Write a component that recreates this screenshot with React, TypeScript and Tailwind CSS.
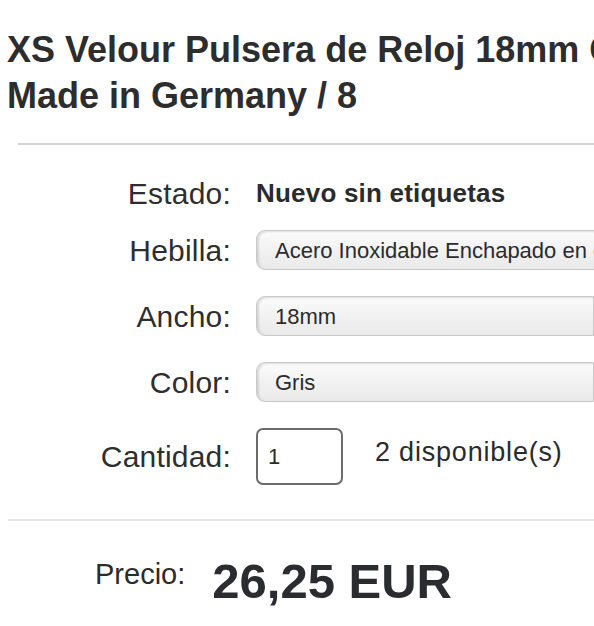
const Select = ({ value }: { value: string }) => (
  <div className="flex h-[40px] flex-1 items-center overflow-hidden whitespace-nowrap rounded-l-[9px] border border-[#c9c9c9] bg-gradient-to-b from-[#fbfbfb] to-[#e9e9e9] pl-[18px] text-[22px] text-[#2b2b2b] shadow-[inset_2px_1px_2px_rgba(0,0,0,0.12)]">
    {value}
  </div>
);

const Row = ({ label, children, h }: { label: string; children: React.ReactNode; h: string }) => (
  <div className={`flex items-center ${h}`}>
    <div className="w-[231px] shrink-0 text-right text-[30px] tracking-[0.2px] text-[#2e2e2e]">{label}</div>
    <div className="ml-[25px] flex flex-1 items-center">{children}</div>
  </div>
);

export default function App() {
  return (
    <div
      className="h-[626px] w-[594px] overflow-hidden bg-white text-[#2b2b2b]"
      style={{ fontFamily: '"Liberation Sans", Arial, sans-serif' }}
    >
      <h1 className="whitespace-nowrap pl-[7px] pt-[27px] text-[36px] font-bold leading-[46px] text-[#2d2d2d]">
        XS Velour Pulsera de Reloj 18mm Gris
        <br />
        Made in Germany / 8
      </h1>
      <div className="ml-[18px] mt-[24px] h-[2px] bg-[#d2d2d2]" />

      <div className="mt-[24px] flex flex-col">
        <Row label="Estado:" h="h-[48px]">
          <span className="whitespace-nowrap text-[26px] font-bold tracking-[0.2px] text-[#2b2b2b]">Nuevo sin etiquetas</span>
        </Row>
        <Row label="Hebilla:" h="h-[66px]">
          <Select value="Acero Inoxidable Enchapado en oro" />
        </Row>
        <Row label="Ancho:" h="h-[66px]">
          <Select value="18mm" />
        </Row>
        <Row label="Color:" h="h-[66px]">
          <Select value="Gris" />
        </Row>
        <Row label="Cantidad:" h="h-[82px]">
          <div className="flex h-[57px] w-[87px] items-center rounded-[7px] border-2 border-[#6b6b6b] pl-[10px] text-[22px]">
            1
          </div>
          <span className="ml-[32px] -mt-[8px] text-[27px] tracking-[0.8px] text-[#2b2b2b]">2 disponible(s)</span>
        </Row>
      </div>

      <div className="ml-[8px] mt-[22px] h-[2px] bg-[#e6e6e6]" />

      <div className="mt-[32px] flex items-start">
        <span className="ml-[95px] mt-[7px] text-[29px] leading-[29px] text-[#2b2b2b]">Precio:</span>
        <span className="ml-[27px] text-[49px] font-bold leading-[56px] text-[#2a2c30]">26,25 EUR</span>
      </div>
    </div>
  );
}
